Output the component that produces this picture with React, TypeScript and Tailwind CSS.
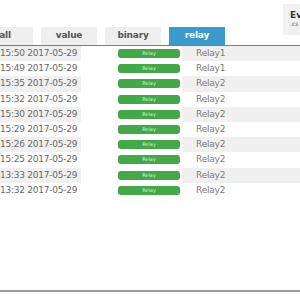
import React from "react";

const rows = [
  ["15:50 2017-05-29", "Relay1"],
  ["15:49 2017-05-29", "Relay1"],
  ["15:35 2017-05-29", "Relay2"],
  ["15:32 2017-05-29", "Relay2"],
  ["15:30 2017-05-29", "Relay2"],
  ["15:29 2017-05-29", "Relay2"],
  ["15:26 2017-05-29", "Relay2"],
  ["15:25 2017-05-29", "Relay2"],
  ["13:33 2017-05-29", "Relay2"],
  ["13:32 2017-05-29", "Relay2"],
];

const tabs = ["all", "value", "binary", "relay"];

export default function App() {
  return (
    <div
      className="w-[300px] h-[300px] overflow-hidden bg-white"
      style={{ fontFamily: '"DejaVu Sans", Verdana, sans-serif' }}
    >
      <div className="flex h-[46px] border-b border-[#7a7a7a]">
        <div className="flex gap-[8px] ml-[-23px] self-end">
          {tabs.map((t) => (
            <div
              key={t}
              className={
                "w-[56px] h-[18px] flex items-center justify-center text-[9px] font-bold tracking-[-0.2px] " +
                (t === "relay"
                  ? "bg-[#3b9acb] text-white"
                  : "bg-[#efefef] text-[#555]")
              }
            >
              {t}
            </div>
          ))}
        </div>
        <div className="ml-auto mt-[4px] w-[17px] h-[31px] bg-[#f1f1f1] overflow-hidden pl-[7px] pt-[7px] leading-none">
          <div className="text-[9px] font-bold text-[#333] whitespace-nowrap">Ev</div>
          <div className="text-[6px] text-[#555] whitespace-nowrap mt-[1px]">.cs</div>
        </div>
      </div>
      <div className="flex flex-col">
        {rows.map(([time, relay], i) => {
          const stripe = i % 2 === 0 ? "bg-[#f0f0f0]" : "bg-white";
          return (
            <div key={i} className="flex h-[15.2px] items-center text-[9px] leading-none">
              <div
                className={
                  "w-[81px] h-full flex items-center text-[#6a6a6a] tracking-[-0.25px] whitespace-nowrap " +
                  stripe
                }
              >
                {time}
              </div>
              <div className="w-[101px] h-full flex items-center pl-[37px]">
                <div className="w-[62px] h-[9px] rounded-[3px] bg-[#45a848] flex items-center justify-center text-[5px] text-[#d8f0d8]">
                  Relay
                </div>
              </div>
              <div
                className={
                  "flex-1 h-full flex items-center pl-[14px] text-[#7a7a7a] tracking-[-0.2px] " +
                  stripe
                }
              >
                {relay}
              </div>
            </div>
          );
        })}
      </div>
      <div className="mt-[92px] h-[2px] bg-[#9a9a9a]" />
    </div>
  );
}
